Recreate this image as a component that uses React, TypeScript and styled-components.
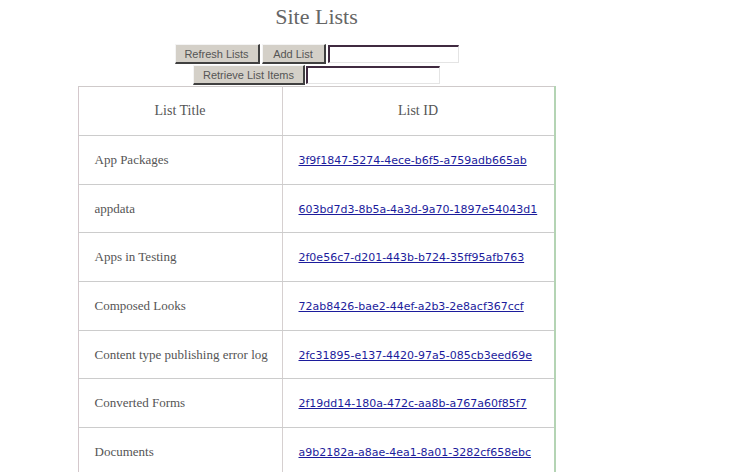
import styled, { createGlobalStyle } from 'styled-components';

const GlobalStyle = createGlobalStyle`
    html, body {
        margin: 0;
        padding: 0;
        background: #ffffff;
        overflow: hidden;
    }
    body {
        font-family: "Liberation Serif", "Times New Roman", serif;
        color: #555555;
    }
`;

const lists = [
    { title: 'App Packages', id: '3f9f1847-5274-4ece-b6f5-a759adb665ab' },
    { title: 'appdata', id: '603bd7d3-8b5a-4a3d-9a70-1897e54043d1' },
    { title: 'Apps in Testing', id: '2f0e56c7-d201-443b-b724-35ff95afb763' },
    { title: 'Composed Looks', id: '72ab8426-bae2-44ef-a2b3-2e8acf367ccf' },
    { title: 'Content type publishing error log', id: '2fc31895-e137-4420-97a5-085cb3eed69e' },
    { title: 'Converted Forms', id: '2f19dd14-180a-472c-aa8b-a767a60f85f7' },
    { title: 'Documents', id: 'a9b2182a-a8ae-4ea1-8a01-3282cf658ebc' },
];

const Page = styled.div`
    width: 633px;
    text-align: center;
`;

const Title = styled.h1`
    margin: 0;
    padding-top: 2px;
    height: 30px;
    line-height: 30px;
    font-size: 22px;
    font-weight: normal;
    color: #666666;
    margin-bottom: 12px;
`;

const ControlRow = styled.div<{ $gap?: number }>`
    display: flex;
    justify-content: center;
    align-items: center;
    gap: ${(p) => p.$gap ?? 2}px;
    height: 20px;
    margin-bottom: 1px;
`;

const Button = styled.button<{ $width: number }>`
    width: ${(p) => p.$width}px;
    height: 20px;
    padding: 0;
    background: #d4d0c8;
    color: #555555;
    font-family: "Liberation Sans", Arial, sans-serif;
    font-size: 11px;
    border-style: solid;
    border-width: 1px 2px 2px 1px;
    border-color: #f4f4f4 #404040 #404040 #f4f4f4;
`;

const TextBox = styled.input<{ $width: number }>`
    box-sizing: border-box;
    width: ${(p) => p.$width}px;
    height: 18px;
    padding: 0 2px;
    background: #ffffff;
    border-style: solid;
    border-width: 2px 1px 1px 2px;
    border-color: #402a40 #e4e4e4 #e4e4e4 #402a40;
    outline: none;
`;

const Table = styled.table`
    width: 474px;
    margin: 0 auto;
    border-collapse: collapse;
    border-top: 1px solid #cfcaca;
    border-left: 1px solid #d4c8cc;
    border-right: 2px solid #b4d4b4;
    table-layout: fixed;
`;

const HeadCell = styled.th<{ $width: number }>`
    width: ${(p) => p.$width}px;
    height: 48px;
    padding: 0;
    font-size: 14px;
    font-weight: normal;
    color: #555555;
    text-align: center;
    border-bottom: 1px solid #cccccc;
    border-right: 1px solid #d6d0d0;
`;

const Cell = styled.td`
    height: 47.7px;
    padding: 0 0 0 16px;
    font-size: 13px;
    color: #555555;
    text-align: left;
    border-bottom: 1px solid #cccccc;
    border-right: 1px solid #d6d0d0;
    white-space: nowrap;
`;

const IdLink = styled.a`
    font-family: "DejaVu Sans", Verdana, sans-serif;
    font-size: 11px;
    color: #1c1c9c;
    text-decoration: underline;
`;

export default function App() {
    return (
        <>
            <GlobalStyle />
            <Page>
                <Title>Site Lists</Title>
                <ControlRow>
                    <Button $width={85}>Refresh Lists</Button>
                    <Button $width={64}>Add List</Button>
                    <TextBox $width={131} />
                </ControlRow>
                <ControlRow $gap={1}>
                    <Button $width={112}>Retrieve List Items</Button>
                    <TextBox $width={134} />
                </ControlRow>
                <Table>
                    <thead>
                        <tr>
                            <HeadCell $width={203}>List Title</HeadCell>
                            <HeadCell $width={271}>List ID</HeadCell>
                        </tr>
                    </thead>
                    <tbody>
                        {lists.map((list) => (
                            <tr key={list.id}>
                                <Cell>{list.title}</Cell>
                                <Cell>
                                    <IdLink href="#">{list.id}</IdLink>
                                </Cell>
                            </tr>
                        ))}
                    </tbody>
                </Table>
            </Page>
        </>
    );
}
